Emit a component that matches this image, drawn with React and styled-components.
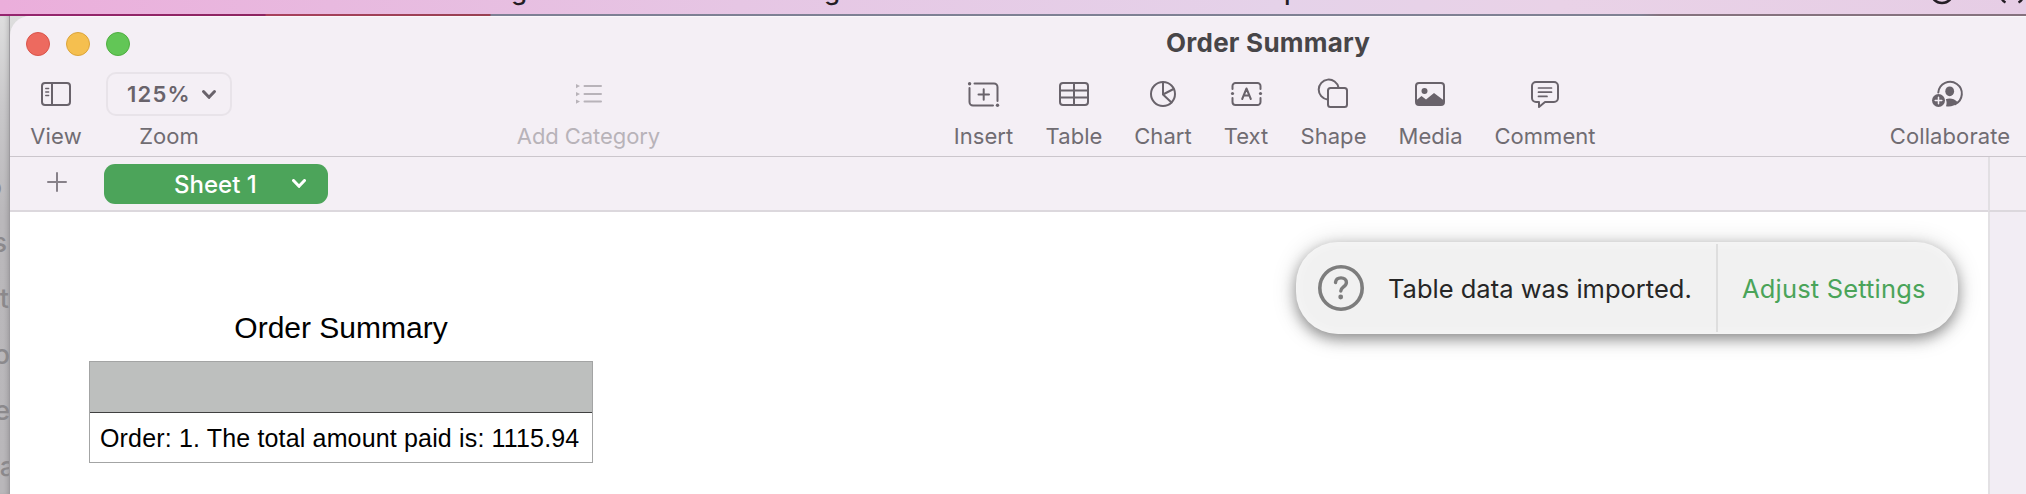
import React from 'react';
import styled, { createGlobalStyle } from 'styled-components';

const Global = createGlobalStyle`
  *, *::before, *::after { box-sizing: border-box; }
  body { margin: 0; overflow: hidden; background: #bbb9bc; }
`;
const ui = `Inter, "Liberation Sans", sans-serif`;
const INK = '#69636b';

const Desktop = styled.div`
  width: 2026px; height: 494px; overflow: hidden;
  display: flex; flex-direction: column;
  font-family: ${ui};
`;
const MenuBar = styled.div`
  position: relative; flex: none; height: 16px; overflow: hidden;
  background: linear-gradient(90deg, #ebaedb 0, #e8b9df 330px, #e6c6e4 740px, #e5d2e9 1280px, #e9d2e7 1560px, #e6cde5 100%);
`;
const MenuEdge = styled.div`
  position: absolute; left: 0; right: 0; bottom: 0; height: 2px;
  background: linear-gradient(90deg, #95256f 0, #8d2460 265px, #a8405c 266px, #984052 490px, #7d8094 491px, #7f8193 1640px, #85727e 1660px, #85727e 100%);
`;
const MenuGlyph = styled.span`
  position: absolute; left: ${p => p.$x}px; top: -22.5px;
  font-size: 26px; line-height: 26px; font-weight: 500; color: #241d24;
`;
const MenuIcon = styled.svg`
  position: absolute; left: ${p => p.$x}px; top: 0;
`;
const Stage = styled.div`
  flex: 1; display: flex; min-height: 0;
  background: linear-gradient(180deg, #dedede 0, #c9c8ca 90px, #bab8bb 200px, #b9b7ba 100%);
`;
const Backdrop = styled.div`
  flex: none; width: 10px; overflow: hidden; padding-top: 143px;
  display: flex; flex-direction: column; align-items: flex-end;
  border-right: 1px solid #9d9b9f;
  box-shadow: inset -4px 0 5px -3px rgba(0,0,0,.18);
`;
const BackLetter = styled.span`
  display: block; flex: none; height: 56px; line-height: 56px;
  margin-right: ${p => p.$r}px;
  font-size: 27px; font-weight: 500; color: #8b898c;
`;
const Window = styled.div`
  flex: 1; min-width: 0; display: flex; flex-direction: column;
  background: #f4eff5; border-top-left-radius: 20px; overflow: hidden;
`;
const TitleBar = styled.div`
  flex: none; height: 54px; display: flex; align-items: center;
  padding: 0 0 0 16px; border-top: 1px solid #fbf8fb;
`;
const Lights = styled.div`display: flex; gap: 16px;`;
const Light = styled.i`
  width: 24px; height: 24px; border-radius: 50%;
  background: ${p => p.$c}; border: 1px solid ${p => p.$b};
`;
const Title = styled.h1`
  margin: 0 0 2px 1036px; font-size: 26px; font-weight: 700; line-height: 32px;
  color: #474548; white-space: nowrap; letter-spacing: 0.25px;
`;
const Toolbar = styled.div`
  flex: none; height: 87px; padding-left: 20px; display: flex;
  border-bottom: 1px solid #cbc6cc;
`;
const Group = styled.div`display: flex; gap: ${p => p.$gap || 34}px; margin-left: ${p => p.$ml || 0}px;`;
const Item = styled.div`
  flex: none; width: ${p => p.$w}px; height: 86px;
  display: flex; flex-direction: column; align-items: center;
  color: ${p => (p.$off ? '#b8b3b9' : '#706c72')};
`;
const IconSlot = styled.div`
  height: 50px; padding-bottom: 2px; margin-right: ${p => p.$shift || 0}px;
  display: flex; align-items: center; justify-content: center;
  svg { display: block; overflow: visible; }
`;
const Label = styled.span`
  font-size: 22px; line-height: 32px; white-space: nowrap; letter-spacing: ${p => p.$ls}px;
`;
const ZoomButton = styled.div`
  width: 126px; height: 44px;
  display: flex; align-items: center; padding-left: 19px; gap: 11px;
  border: 2px solid #e8e3e9; border-radius: 10px;
  font-size: 22px; font-weight: 600; color: #69636b; letter-spacing: 1.2px;
`;
const TabBar = styled.div`flex: none; height: 55px; display: flex;`;
const Tabs = styled.div`
  flex: none; width: 1978px; display: flex; align-items: center;
  padding-left: 37px; border-bottom: 2px solid #dcd8dd;
  > svg { margin-bottom: 3px; }
`;
const Tab = styled.div`
  width: 224px; height: 40px; margin: 1px 0 0 37px; padding-left: 70px;
  display: flex; align-items: center; gap: 35px;
  background: #4ca45a; border-radius: 11px; color: #fff;
  font-size: 24px; font-weight: 500; white-space: nowrap;
  svg { margin-bottom: 2px; }
`;
const TabSpill = styled.div`
  flex: 1; border-left: 2px solid #e2dfe3; border-bottom: 2px solid #dcd8dd; background: #f3eef4;
`;
const Body = styled.div`flex: 1; display: flex; min-height: 0;`;
const Canvas = styled.div`
  position: relative; flex: none; width: 1978px; background: #fff; overflow: hidden;
  padding: 98px 0 0 79px;
`;
const Inspector = styled.div`flex: 1; border-left: 2px solid #e3e1e4; background: #f2edf4;`;
const Sheet = styled.div`width: 504px; font-family: "Liberation Sans", Arial, sans-serif; color: #000;`;
const SheetTitle = styled.div`
  height: 51px; line-height: 36px; font-size: 30px; text-align: center;
`;
const Grid = styled.div`border: 1px solid #a3a4a4;`;
const HeaderRow = styled.div`height: 51px; background: #bdbfbe; border-bottom: 1px solid #3f4040;`;
const Row = styled.div`
  height: 49px; padding-left: 10px; line-height: 51px; font-size: 25px; white-space: nowrap;
  letter-spacing: 0.16px;
`;
const Notice = styled.div`
  position: absolute; left: 1286px; top: 30px; width: 662px; height: 92px;
  display: flex; align-items: center; border-radius: 42px; background: #f1f1f1;
  box-shadow: inset 0 0 12px 2px rgba(255,255,255,.35), 0 5px 14px rgba(0,0,0,.38), 0 2px 26px rgba(0,0,0,.16);
  font-size: 25.5px; white-space: nowrap;
`;
const NoticeMain = styled.div`
  flex: none; width: 420px; display: flex; align-items: center; gap: 24px; padding-left: 22px;
  color: #262626;
  svg { flex: none; }
`;
const NoticeAction = styled.div`
  flex: 1; height: 88px; display: flex; align-items: center; padding-left: 24px;
  border-left: 2px solid #dedede; color: #4aa459; letter-spacing: 0.17px;
`;

const Svg = ({ w, h, children, s = 2, c = INK }) => (
  <svg width={w} height={h} viewBox={`0 0 ${w} ${h}`} fill="none" stroke={c} strokeWidth={s} strokeLinecap="round" strokeLinejoin="round">{children}</svg>
);
const Chevron = ({ c }) => <Svg w={14} h={9} s={3} c={c}><path d="M1.5 1.5 7 7.3l5.5-5.8" /></Svg>;

const ViewIcon = () => (
  <Svg w={30} h={24}><rect x="1" y="1" width="28" height="22" rx="3" /><path d="M11 1v22" /><path d="M4.7 6.5h3M4.7 10h3M4.7 13.5h3" strokeWidth="1.3" /></Svg>
);
const CategoryIcon = () => (
  <Svg w={26} h={20} c="#b8b3b9"><path d="M8.5 2h16.5M8.5 10h16.5M8.5 17.5h16.5" /><path d="M0 0l4 2-4 2.2zM0 8l4 2-4 2.2zM0 15.5l4 2-4 2.2z" fill="#b8b3b9" stroke="none" /></Svg>
);
const InsertIcon = () => (
  <Svg w={31} h={25}><path d="M6.5 1.5H26a3.5 3.5 0 0 1 3.5 3.5V19M25 23.5H5A3.5 3.5 0 0 1 1.5 20V6M10.5 12.5h10.5M15.7 7.3v10.5" /><circle cx="1.6" cy="1.7" r="1.7" fill={INK} stroke="none" /><circle cx="29.5" cy="23.3" r="1.7" fill={INK} stroke="none" /></Svg>
);
const TableIcon = () => (
  <Svg w={30} h={24}><rect x="1" y="1" width="28" height="22" rx="3" /><path d="M15 1v22M1 8.5h28M1 15.5h28" /></Svg>
);
const ChartIcon = () => (
  <Svg w={26} h={26}><circle cx="13" cy="13" r="12" /><path d="M13 1v12.5l8.5 8M13 13.5l10.5-5.5" /></Svg>
);
const TextIcon = () => (
  <Svg w={31} h={24}><path d="M1.5 7V4a3 3 0 0 1 3-3h22a3 3 0 0 1 3 3v3M1.5 16v4a3 3 0 0 0 3 3h22a3 3 0 0 0 3-3v-4M11.2 17l4.3-10.5L19.8 17M12.5 13.5h6" /><circle cx="1.5" cy="11.5" r="1.6" fill={INK} stroke="none" /><circle cx="29.5" cy="11.5" r="1.6" fill={INK} stroke="none" /></Svg>
);
const ShapeIcon = () => (
  <Svg w={29} h={28}><path d="M8.5 19.5A10 10 0 1 1 19.5 7.5" /><rect x="9" y="8" width="19" height="19" rx="2.5" /></Svg>
);
const MediaIcon = () => (
  <Svg w={30} h={24}><rect x="1" y="1" width="28" height="22" rx="3" /><circle cx="9.5" cy="9" r="3" fill={INK} stroke="none" /><path d="M1 18.5l5.5-4.5 4.5 3.5 8-6.5 10 7.5V21a2 2 0 0 1-2 2H3a2 2 0 0 1-2-2z" fill={INK} stroke="none" /></Svg>
);
const CommentIcon = () => (
  <Svg w={28} h={27}><path d="M5 1h18a4 4 0 0 1 4 4v12a4 4 0 0 1-4 4H14l-6 5v-5H5a4 4 0 0 1-4-4V5a4 4 0 0 1 4-4z" /><path d="M7.5 7h13M7.5 11.2h13M7.5 15.4h8.500" strokeWidth="1.7" /></Svg>
);
const CollaborateIcon = () => (
  <Svg w={31} h={26}>
    <path d="M6.3 11.5A11.8 11.8 0 1 1 23 23.3" /><ellipse cx="17.7" cy="10.3" rx="4.4" ry="4.9" fill={INK} stroke="none" />
    <path d="M14 25.300c.8-2 .9-4.800-.2-7 3-1.600 8.300-1.200 11.700 2.700-2.700 3.700-7 5.300-11.500 4.300z" fill={INK} stroke="none" />
    <circle cx="6.5" cy="19.5" r="6.5" fill={INK} stroke="none" /><path d="M6.5 16.2v6.6M3.2 19.5h6.6" stroke="#f4eff5" strokeWidth="1.5" />
  </Svg>
);

const tools = [
  ['Insert', 59, InsertIcon], ['Table', 54, TableIcon], ['Chart', 56, ChartIcon], ['Text', 42, TextIcon],
  ['Shape', 65, ShapeIcon], ['Media', 61, MediaIcon, 2], ['Comment', 100, CommentIcon],
];
const Tool = ({ name, w, icon: Icon, ls = 0.05, off, shift }) => (
  <Item $w={w} $off={off}><IconSlot $shift={shift}><Icon /></IconSlot><Label $ls={ls}>{name}</Label></Item>
);

export default function App() {
  return (
    <Desktop>
      <Global />
      <MenuBar>
        <MenuGlyph $x={511}>g</MenuGlyph>
        <MenuGlyph $x={824}>g</MenuGlyph>
        <MenuGlyph $x={1284}>p</MenuGlyph>
        <MenuIcon $x={1930} width="24" height="5"><circle cx="12" cy="-8" r="11" fill="none" stroke="#241d24" strokeWidth="2.5" /></MenuIcon>
        <MenuIcon $x={2000} width="26" height="5"><path d="M1.5-2q1 3 4 4.500M22.500-2q-1 3-4 4.500" fill="none" stroke="#241d24" strokeWidth="2.5" /></MenuIcon>
        <MenuEdge />
      </MenuBar>
      <Stage>
        <Backdrop>
          <BackLetter $r={7}>o</BackLetter><BackLetter $r={2}>s</BackLetter><BackLetter $r={0}>t</BackLetter>
          <BackLetter $r={-1}>o</BackLetter><BackLetter $r={-1}>e</BackLetter><BackLetter $r={-6}>a</BackLetter>
        </Backdrop>
        <Window>
          <TitleBar>
            <Lights>
              <Light $c="#ed6a5f" $b="#d9544a" /><Light $c="#f5bf4f" $b="#dba43b" /><Light $c="#62c656" $b="#4fae40" />
            </Lights>
            <Title>Order Summary</Title>
          </TitleBar>
          <Toolbar>
            <Group $gap={24}>
              <Tool name="View" w={52} icon={ViewIcon} ls={0.2} />
              <Item $w={126}><IconSlot><ZoomButton>125%<Chevron c={INK} /></ZoomButton></IconSlot><Label $ls={0}>Zoom</Label></Item>
            </Group>
            <Group $ml={284}><Tool name="Add Category" w={145} icon={CategoryIcon} ls={-0.08} off /></Group>
            <Group $ml={293}>{tools.map(([n, w, i, shift]) => <Tool key={n} name={n} w={w} icon={i} shift={shift} />)}</Group>
            <Group $ml={295}><Tool name="Collaborate" w={120} icon={CollaborateIcon} ls={0.1} shift={6} /></Group>
          </Toolbar>
          <TabBar>
            <Tabs>
              <Svg w={20} h={20} c="#878189"><path d="M10 1v18M1 10h18" /></Svg>
              <Tab>Sheet 1<Chevron c="#fff" /></Tab>
            </Tabs>
            <TabSpill />
          </TabBar>
          <Body>
            <Canvas>
              <Sheet>
                <SheetTitle>Order Summary</SheetTitle>
                <Grid><HeaderRow /><Row>Order: 1. The total amount paid is: 1115.94</Row></Grid>
              </Sheet>
              <Notice>
                <NoticeMain>
                  <svg width="46" height="46" fill="none" stroke="#7d7d7d"><circle cx="23" cy="23" r="21.2" strokeWidth="3.6" /><path d="M17.5 17.5c.3-3 2.7-4.600 5.500-4.600 3 0 5.400 1.800 5.400 4.500 0 4.600-5.600 4.500-5.600 8.600" strokeWidth="3.4" strokeLinecap="round" /><circle cx="22.7" cy="32" r="2.4" fill="#7d7d7d" stroke="none" /></svg>
                  <span>Table data was imported.</span>
                </NoticeMain>
                <NoticeAction>Adjust Settings</NoticeAction>
              </Notice>
            </Canvas>
            <Inspector />
          </Body>
        </Window>
      </Stage>
    </Desktop>
  );
}
